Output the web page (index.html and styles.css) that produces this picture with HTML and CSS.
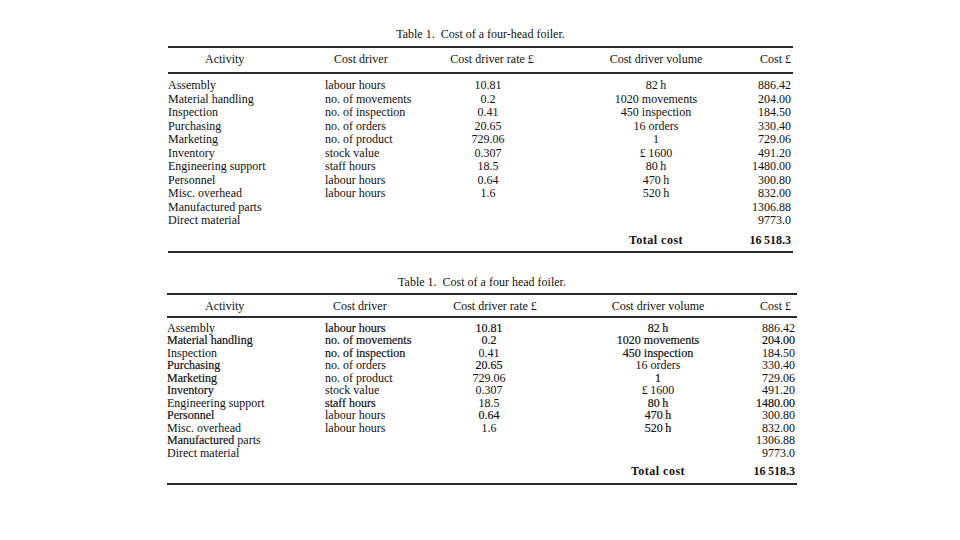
FILE: index.html
```html
<!DOCTYPE html>
<html lang="en">
<head>
<meta charset="utf-8">
<title>Cost of a four-head foiler</title>
<link rel="stylesheet" href="styles.css">
</head>
<body>
<main class="page">
  <figure class="tbl tbl-a">
    <figcaption><span class="lbl">Table 1.</span> Cost of a four-head foiler.</figcaption>
    <table>
      <colgroup><col class="c1"><col class="c2"><col class="c3"><col class="c4"><col class="c5"></colgroup>
      <thead>
        <tr><th class="a">Activity</th><th class="d">Cost driver</th><th class="r">Cost driver rate £</th><th class="v">Cost driver volume</th><th class="c">Cost £</th></tr>
      </thead>
      <tbody>
        <tr class="first"><td class="a">Assembly</td><td class="d">labour hours</td><td class="r">10.81</td><td class="v">82&#8201;h</td><td class="c">886.42</td></tr>
        <tr><td class="a">Material handling</td><td class="d">no. of movements</td><td class="r">0.2</td><td class="v">1020 movements</td><td class="c">204.00</td></tr>
        <tr><td class="a">Inspection</td><td class="d">no. of inspection</td><td class="r">0.41</td><td class="v">450 inspection</td><td class="c">184.50</td></tr>
        <tr><td class="a">Purchasing</td><td class="d">no. of orders</td><td class="r">20.65</td><td class="v">16 orders</td><td class="c">330.40</td></tr>
        <tr><td class="a">Marketing</td><td class="d">no. of product</td><td class="r">729.06</td><td class="v">1</td><td class="c">729.06</td></tr>
        <tr><td class="a">Inventory</td><td class="d">stock value</td><td class="r">0.307</td><td class="v">£&#8201;1600</td><td class="c">491.20</td></tr>
        <tr><td class="a">Engineering support</td><td class="d">staff hours</td><td class="r">18.5</td><td class="v">80&#8201;h</td><td class="c">1480.00</td></tr>
        <tr><td class="a">Personnel</td><td class="d">labour hours</td><td class="r">0.64</td><td class="v">470&#8201;h</td><td class="c">300.80</td></tr>
        <tr><td class="a">Misc. overhead</td><td class="d">labour hours</td><td class="r">1.6</td><td class="v">520&#8201;h</td><td class="c">832.00</td></tr>
        <tr><td class="a">Manufactured parts</td><td class="d"></td><td class="r"></td><td class="v"></td><td class="c">1306.88</td></tr>
        <tr><td class="a">Direct material</td><td class="d"></td><td class="r"></td><td class="v"></td><td class="c">9773.0</td></tr>
        <tr class="total"><td class="a"></td><td class="d"></td><td class="r"></td><td class="v tl">Total cost</td><td class="c tn">16&#8201;518.3</td></tr>
      </tbody>
    </table>
  </figure>

  <figure class="tbl tbl-b">
    <figcaption><span class="lbl">Table 1.</span> Cost of a four head foiler.</figcaption>
    <table>
      <colgroup><col class="c1"><col class="c2"><col class="c3"><col class="c4"><col class="c5"></colgroup>
      <thead>
        <tr><th class="a">Activity</th><th class="d">Cost driver</th><th class="r">Cost driver rate £</th><th class="v">Cost driver volume</th><th class="c">Cost £</th></tr>
      </thead>
      <tbody>
        <tr class="first"><td class="a">Assembly</td><td class="d hv">labour hours</td><td class="r hv">10.81</td><td class="v hv">82&#8201;h</td><td class="c">886.42</td></tr>
        <tr><td class="a hv">Material handling</td><td class="d hv">no. of movements</td><td class="r hv">0.2</td><td class="v hv">1020 movements</td><td class="c hv">204.00</td></tr>
        <tr><td class="a">Inspection</td><td class="d hv">no. of inspection</td><td class="r">0.41</td><td class="v hv">450 inspection</td><td class="c">184.50</td></tr>
        <tr><td class="a hv">Purchasing</td><td class="d">no. of orders</td><td class="r hv">20.65</td><td class="v">16 orders</td><td class="c">330.40</td></tr>
        <tr><td class="a hv">Marketing</td><td class="d">no. of product</td><td class="r">729.06</td><td class="v hv">1</td><td class="c">729.06</td></tr>
        <tr><td class="a hv">Inventory</td><td class="d">stock value</td><td class="r">0.307</td><td class="v">£&#8201;1600</td><td class="c">491.20</td></tr>
        <tr><td class="a">Engineering support</td><td class="d hv">staff hours</td><td class="r">18.5</td><td class="v hv">80&#8201;h</td><td class="c hv">1480.00</td></tr>
        <tr><td class="a hv">Personnel</td><td class="d">labour hours</td><td class="r hv">0.64</td><td class="v hv">470&#8201;h</td><td class="c">300.80</td></tr>
        <tr><td class="a">Misc. overhead</td><td class="d">labour hours</td><td class="r">1.6</td><td class="v hv">520&#8201;h</td><td class="c">832.00</td></tr>
        <tr><td class="a"><span class="hv">Manufactured</span> parts</td><td class="d"></td><td class="r"></td><td class="v"></td><td class="c">1306.88</td></tr>
        <tr><td class="a">Direct material</td><td class="d"></td><td class="r"></td><td class="v"></td><td class="c">9773.0</td></tr>
        <tr class="total"><td class="a"></td><td class="d"></td><td class="r"></td><td class="v tl">Total cost</td><td class="c tn">16&#8201;518.3</td></tr>
      </tbody>
    </table>
  </figure>
</main>
</body>
</html>
```

FILE: styles.css
```css
* { box-sizing: border-box; }

html, body {
  margin: 0;
  padding: 0;
  background: #ffffff;
}

body {
  width: 960px;
  height: 540px;
  overflow: hidden;
  font-family: "Liberation Serif", "Times New Roman", serif;
  font-size: 12px;
  color: #111111;
}

.page {
  display: flex;
  flex-direction: column;
  align-items: flex-start;
  padding-top: 27px;
}

.tbl { margin: 0; }

.tbl-a { width: 625px; margin-left: 168px; }
.tbl-b { width: 630px; margin-left: 167px; margin-top: 22px; }

figcaption {
  text-align: center;
  height: 14px;
  line-height: 14px;
  margin-bottom: 5px;
}

.tbl-b figcaption { margin-bottom: 4px; }

.lbl { margin-right: 3px; }

table {
  width: 100%;
  table-layout: fixed;
  border-collapse: separate;
  border-spacing: 0;
  border-top: 2px solid #2a2a2a;
  border-bottom: 2px solid #2a2a2a;
}

th, td {
  padding: 0;
  white-space: nowrap;
  font-weight: normal;
}

th { border-bottom: 2px solid #2a2a2a; }

.a { text-align: left; }
.d { text-align: left; }
.r { text-align: center; }
.v { text-align: center; }
.c { text-align: right; }

/* ---- table A ---- */
.tbl-a col.c1 { width: 132px; }
.tbl-a col.c2 { width: 128px; }
.tbl-a col.c3 { width: 152px; }
.tbl-a col.c4 { width: 152px; }
.tbl-a col.c5 { width: 61px; }

.tbl-a th, .tbl-a td { line-height: 13.5px; }
.tbl-a th { padding-top: 5px; padding-bottom: 5px; }
.tbl-a th.a { padding-left: 37px; }
.tbl-a th.d { padding-left: 34px; }
.tbl-a th.r { padding-right: 24px; }
.tbl-a th.c { padding-right: 2px; }
.tbl-a td.d { padding-left: 25px; }
.tbl-a td.r { padding-right: 32px; }
.tbl-a td.c { padding-right: 2px; }
.tbl-a tr.first td { padding-top: 5.8px; }
.tbl-a tr.total td { padding-top: 6px; padding-bottom: 4.2px; }

/* ---- table B ---- */
.tbl-b col.c1 { width: 133px; }
.tbl-b col.c2 { width: 128px; }
.tbl-b col.c3 { width: 152px; }
.tbl-b col.c4 { width: 156px; }
.tbl-b col.c5 { width: 61px; }

.tbl-b th, .tbl-b td { line-height: 12.5px; }
.tbl-b th { padding-top: 4.3px; padding-bottom: 4.2px; }
.tbl-b th.a { padding-left: 38px; }
.tbl-b th.d { padding-left: 33px; }
.tbl-b th.r { padding-right: 18px; }
.tbl-b th.c { padding-right: 6px; }
.tbl-b td.d { padding-left: 25px; }
.tbl-b td.r { padding-right: 30px; }
.tbl-b td.c { padding-right: 2px; }
.tbl-b tr.first td { padding-top: 3.5px; }
.tbl-b tr.total td { padding-top: 5.8px; padding-bottom: 5.4px; }

.hv { -webkit-text-stroke: 0.2px currentColor; }

.tl { font-weight: bold; letter-spacing: 0.5px; }
.tn { font-weight: bold; }
```
